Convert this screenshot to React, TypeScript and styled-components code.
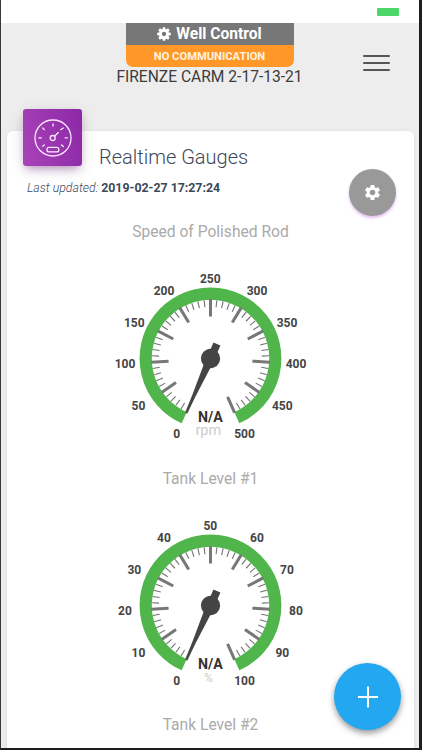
import React from 'react';
import styled, { createGlobalStyle } from 'styled-components';

const GlobalStyle = createGlobalStyle`
  * { box-sizing: border-box; }
  body { margin: 0; background: #ededed; font-family: Roboto, "Liberation Sans", sans-serif; overflow: hidden; }
`;

const Screen = styled.div`
  width: 422px;
  height: 750px;
  background: #ededed;
  border-left: 1px solid #3a3839;
  border-right: 3px solid #1d1e1e;
  border-bottom: 2px solid #1d1d1f;
  overflow: hidden;
  display: flex;
  flex-direction: column;
  position: relative;
`;

const StatusBar = styled.div`
  height: 23px;
  flex: none;
  background: #fff;
  display: flex;
  justify-content: flex-end;
  padding: 8px 20px 0 0;
`;

const Battery = styled.div`
  width: 22px;
  height: 8px;
  background: #4cd667;
  border-radius: 1px;
`;

const Header = styled.header`
  height: 108px;
  flex: none;
  display: grid;
  grid-template-columns: 75px 267px 76px;
  align-items: start;
`;

const HeaderCenter = styled.div`
  grid-column: 2;
  display: flex;
  flex-direction: column;
  align-items: center;
`;

const Badge = styled.div`
  width: 168px;
  border-radius: 0 0 7px 7px;
  overflow: hidden;
`;

const BadgeTitle = styled.div`
  height: 22px;
  background: #777;
  color: #fff;
  display: flex;
  align-items: center;
  justify-content: center;
  gap: 5px;
  font-size: 15.6px;
  font-weight: 700;
`;

const BadgeStatus = styled.div`
  height: 22px;
  background: #ff9829;
  color: #fff3df;
  display: flex;
  align-items: center;
  justify-content: center;
  font-size: 11.2px;
  font-weight: 700;
`;

const WellName = styled.div`
  font-size: 15.6px;
  line-height: 20px;
  color: #3c3c3c;
  white-space: nowrap;
`;

const MenuButton = styled.div`
  width: 27px;
  height: 16px;
  margin: 32px 0 0 20px;
  display: flex;
  flex-direction: column;
  justify-content: space-between;
`;

const MenuLine = styled.div`
  height: 2px;
  border-radius: 1px;
  background: #555;
`;

const Card = styled.main`
  margin: 0 5px 0 6px;
  flex: 1;
  min-height: 0;
  background: #fff;
  border-radius: 6px 6px 0 0;
  box-shadow: 0 1px 4px rgba(0, 0, 0, 0.08);
`;

const CardHeader = styled.div`
  display: flex;
  height: 47px;
  padding-left: 16px;
`;

const Tile = styled.div`
  width: 59px;
  height: 57px;
  margin-top: -22px;
  border-radius: 3px;
  background: linear-gradient(75deg, #a843b8, #8c28a6);
  box-shadow: 0 4px 16px -2px rgba(0, 0, 0, 0.2), 0 5px 8px -3px rgba(156, 39, 176, 0.4);
  display: flex;
  align-items: center;
  justify-content: center;
`;

const CardTitle = styled.h1`
  margin: 12px 0 0 17px;
  font-size: 20px;
  line-height: 28px;
  font-weight: 300;
  color: #3c4858;
`;

const InfoRow = styled.div`
  height: 38px;
  padding: 0 18px 0 20px;
  display: flex;
  justify-content: space-between;
`;

const Updated = styled.div`
  padding-top: 2px;
  font-size: 12.35px;
  line-height: 16px;
  font-weight: 300;
  font-style: italic;
  color: #3c4858;
  b { font-weight: 700; font-style: normal; }
`;

const SettingsButton = styled.div`
  width: 47px;
  height: 47px;
  margin-top: -9px;
  border-radius: 50%;
  background: #999;
  display: flex;
  align-items: center;
  justify-content: center;
  box-shadow: 0 2px 3px rgba(180, 80, 205, 0.38);
`;

const GaugeBlock = styled.section`
  height: 246.5px;
  display: flex;
  flex-direction: column;
  align-items: center;
`;

const GaugeTitle = styled.h2`
  margin: 6px 0 0;
  font-size: 15.6px;
  line-height: 20px;
  font-weight: 400;
  text-align: center;
  color: #aaa;
`;

const Dial = styled.svg`
  width: 220px;
  height: 190px;
  margin: 18px 2px 0 0;
  flex: none;
  font-family: Roboto, "Liberation Sans", sans-serif;
`;

const AddButton = styled.div`
  position: absolute;
  left: 333px;
  top: 663px;
  width: 67px;
  height: 67px;
  border-radius: 50%;
  background: #22a7f0;
  box-shadow: 0 3px 6px rgba(0, 0, 0, 0.42);
  display: flex;
  align-items: center;
  justify-content: center;
`;

const CX = 110.5;
const CY = 98.5;
const START = 24;
const SWEEP = 312;

/* Angles run clockwise from straight down. */
const at = (angle: number, r: number): [number, number] => {
  const t = (angle * Math.PI) / 180;
  return [CX - r * Math.sin(t), CY + r * Math.cos(t)];
};

const LABEL_POS: [number, number][] = [
  [76.7, 173.3], [38.5, 145.3], [25, 104], [34.3, 62.5], [64, 31], [110.3, 18.7],
  [157, 31], [187, 62.5], [196, 104], [182.3, 145.3], [144.5, 173.3],
];

const Gauge = ({ title, max, unit }: { title: string; max: number; unit: string }) => {
  const [ax, ay] = at(START, 64.8);
  const [bx, by] = at(START + SWEEP, 64.8);
  return (
    <GaugeBlock>
      <GaugeTitle>{title}</GaugeTitle>
      <Dial viewBox="0 0 220 190">
        <path d={`M${ax} ${ay}A64.8 64.8 0 1 1 ${bx} ${by}`} fill="none" stroke="#50b64b" strokeWidth="12.2" />
        {Array.from({ length: 51 }, (_, i) => {
          const major = i % 5 === 0;
          const angle = START + (SWEEP * i) / 50;
          const [x1, y1] = at(angle, major ? 59.5 : 58.5);
          const [x2, y2] = at(angle, major ? 42 : 51.5);
          return (
            <line key={i} x1={x1} y1={y1} x2={x2} y2={y2}
              stroke={major ? '#777' : '#737373'} strokeWidth={major ? 3 : 1.1} />
          );
        })}
        {LABEL_POS.map(([x, y], i) => (
          <text key={i} x={x} y={y + 4.3} textAnchor="middle" fontSize="12" fontWeight="700" fill="#444">
            {(max / 10) * i}
          </text>
        ))}
        <text x="108.3" y="175" textAnchor="middle" fontSize={unit === '%' ? 12 : 14.5} fill="#ccc">{unit}</text>
        <text x="110.3" y="161.5" textAnchor="middle" fontSize="14.2" fontWeight="700" fill="#333">N/A</text>
        <g transform={`translate(${CX} ${CY}) rotate(24)`} fill="#444">
          <path d="M-4.2 0L-.6 60H.6L4.2 0Z" />
          <path d="M-3.8-15.8H3.8V-8H-3.8Z" />
          <circle r="9.6" />
        </g>
      </Dial>
    </GaugeBlock>
  );
};

const SpeedometerIcon = () => (
  <svg width="38" height="38" viewBox="0 0 38 38" fill="none" stroke="#fbe6ff" strokeWidth="1.3" strokeLinecap="round">
    <circle cx="19" cy="19" r="18" />
    <circle cx="18.7" cy="19" r="2.5" />
    <path d="M20.7 17L24.4 13.6M19 4.8V7M8.7 9L10.3 10.6M4.8 18.8H7.3M8.7 27.2L10.3 25.9M31.1 18.8H33.5M27.5 25.9L29.4 27.5M26.7 10.7L29.2 9" />
    <rect x="13" y="28.4" width="11.8" height="4.5" rx="2" />
  </svg>
);

const CogIcon = () => (
  <svg width="14" height="14" viewBox="-7 -7 14 14">
    <circle r="3.65" fill="none" stroke="#fff" strokeWidth="3" />
    <g fill="#fff">
      {[0, 45, 90, 135, 180, 225, 270, 315].map((a) => (
        <path key={a} d="M-1.6-4.4L-1.2-6.8H1.2L1.6-4.4Z" transform={`rotate(${a})`} />
      ))}
    </g>
  </svg>
);

const SettingsIcon = () => (
  <svg width="19" height="19" viewBox="0 0 24 24" fill="#fff">
    <path d="M19.14 12.94c.04-.3.06-.61.06-.94 0-.32-.02-.64-.07-.94l2.03-1.58a.49.49 0 0 0 .12-.61l-1.92-3.32a.488.488 0 0 0-.59-.22l-2.39.96c-.5-.38-1.03-.7-1.62-.94l-.36-2.54a.484.484 0 0 0-.48-.41h-3.84c-.24 0-.43.17-.47.41l-.36 2.54c-.59.24-1.13.57-1.62.94l-2.39-.96c-.22-.08-.47 0-.59.22L2.74 8.87c-.12.21-.08.47.12.61l2.03 1.58c-.05.3-.09.63-.09.94s.02.64.07.94l-2.03 1.58a.49.49 0 0 0-.12.61l1.92 3.32c.12.22.37.29.59.22l2.39-.96c.5.38 1.03.7 1.62.94l.36 2.54c.05.24.24.41.48.41h3.84c.24 0 .44-.17.47-.41l.36-2.54c.59-.24 1.13-.56 1.62-.94l2.39.96c.22.08.47 0 .59-.22l1.92-3.32c.12-.22.07-.47-.12-.61l-2.01-1.58zM12 15.6c-1.98 0-3.6-1.62-3.6-3.6s1.62-3.6 3.6-3.6 3.6 1.62 3.6 3.6-1.62 3.6-3.6 3.6z" />
  </svg>
);

export default function App() {
  return (
    <>
      <GlobalStyle />
      <Screen>
        <StatusBar><Battery /></StatusBar>
        <Header>
          <HeaderCenter>
            <Badge>
              <BadgeTitle><CogIcon />Well Control</BadgeTitle>
              <BadgeStatus>NO COMMUNICATION</BadgeStatus>
            </Badge>
            <WellName>FIRENZE CARM 2-17-13-21</WellName>
          </HeaderCenter>
          <MenuButton><MenuLine /><MenuLine /><MenuLine /></MenuButton>
        </Header>
        <Card>
          <CardHeader>
            <Tile><SpeedometerIcon /></Tile>
            <CardTitle>Realtime Gauges</CardTitle>
          </CardHeader>
          <InfoRow>
            <Updated>Last updated: <b>2019-02-27 17:27:24</b></Updated>
            <SettingsButton><SettingsIcon /></SettingsButton>
          </InfoRow>
          <Gauge title="Speed of Polished Rod" max={500} unit="rpm" />
          <Gauge title="Tank Level #1" max={100} unit="%" />
          <GaugeTitle>Tank Level #2</GaugeTitle>
        </Card>
        <AddButton>
          <svg width="22" height="22" viewBox="0 0 22 22" stroke="#fff" strokeWidth="2">
            <path d="M11 .5V21.5M1 11H21" />
          </svg>
        </AddButton>
      </Screen>
    </>
  );
}
